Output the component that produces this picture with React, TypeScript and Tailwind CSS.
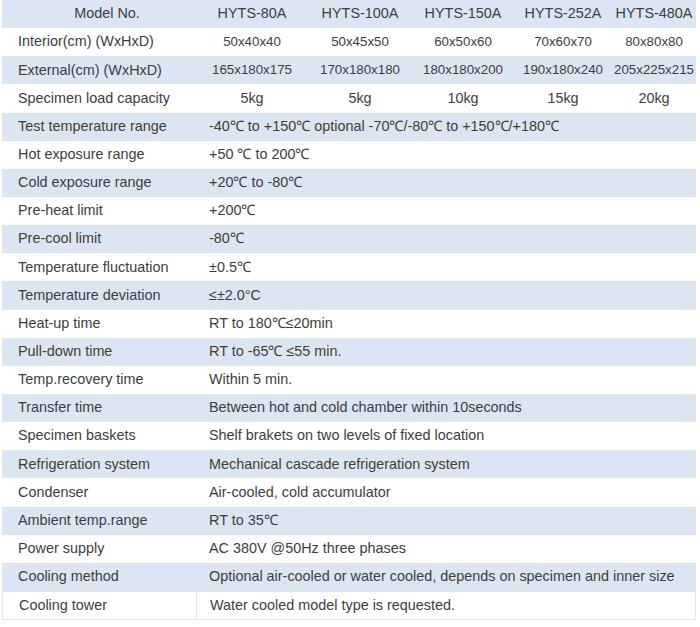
const models = ["HYTS-80A", "HYTS-100A", "HYTS-150A", "HYTS-252A", "HYTS-480A"];

const sizeRows: [string, string[]][] = [
  ["Interior(cm) (WxHxD)", ["50x40x40", "50x45x50", "60x50x60", "70x60x70", "80x80x80"]],
  ["External(cm) (WxHxD)", ["165x180x175", "170x180x180", "180x180x200", "190x180x240", "205x225x215"]],
  ["Specimen load capacity", ["5kg", "5kg", "10kg", "15kg", "20kg"]],
];

const specRows: [string, string][] = [
  ["Test temperature range", "-40℃ to +150℃ optional -70℃/-80℃ to +150℃/+180℃"],
  ["Hot exposure range", "+50 ℃ to 200℃"],
  ["Cold exposure range", "+20℃ to -80℃"],
  ["Pre-heat limit", "+200℃"],
  ["Pre-cool limit", "-80℃"],
  ["Temperature fluctuation", "±0.5℃"],
  ["Temperature deviation", "≤±2.0°C"],
  ["Heat-up time", "RT to 180℃≤20min"],
  ["Pull-down time", "RT to -65℃ ≤55 min."],
  ["Temp.recovery time", "Within 5 min."],
  ["Transfer time", "Between hot and cold chamber within 10seconds"],
  ["Specimen baskets", "Shelf brakets on two levels of fixed location"],
  ["Refrigeration system", "Mechanical cascade refrigeration system"],
  ["Condenser", "Air-cooled, cold accumulator"],
  ["Ambient temp.range", "RT to 35℃"],
  ["Power supply", "AC 380V @50Hz three phases"],
  ["Cooling method", "Optional air-cooled or water cooled, depends on specimen and inner size"],
  ["Cooling tower", "Water cooled model type is requested."],
];

const cols = "grid grid-cols-[194px_112px_104px_102px_98px_84px] h-[28.15px] items-center";

const App = () => {
  return (
    <div className="w-[700px] h-[627px] bg-white pl-[2px] text-[14.4px] text-[#3d3d3d] font-['Liberation_Sans',Arial,sans-serif]">
      <div className="w-[694px]">
        <div className={`${cols} bg-[#dce6f2]`}>
          <div className="text-center pl-4">Model No.</div>
          {models.map((m) => (
            <div key={m} className="text-center whitespace-nowrap">
              {m}
            </div>
          ))}
        </div>
        {sizeRows.map(([label, vals], i) => (
          <div key={label} className={`${cols} ${i % 2 === 1 ? "bg-[#dce6f2]" : "bg-white"}`}>
            <div className="pl-4">{label}</div>
            {vals.map((v, j) => (
              <div key={j} className={`text-center whitespace-nowrap ${i === 2 ? "" : "text-[13.3px]"}`}>
                {v}
              </div>
            ))}
          </div>
        ))}
        {specRows.map(([label, val], i) => {
          const last = i === specRows.length - 1;
          return (
            <div
              key={label}
              className={`grid grid-cols-[194px_500px] h-[28.15px] items-center ${
                i % 2 === 0 ? "bg-[#dce6f2]" : "bg-white"
              } ${last ? "border border-[#e6e6e6] h-[29px]" : ""}`}
            >
              <div className={`pl-4 h-full flex items-center ${last ? "border-r border-[#e6e6e6]" : ""}`}>
                {label}
              </div>
              <div className="pl-[13px] whitespace-nowrap">{val}</div>
            </div>
          );
        })}
      </div>
    </div>
  );
};

export default App;
